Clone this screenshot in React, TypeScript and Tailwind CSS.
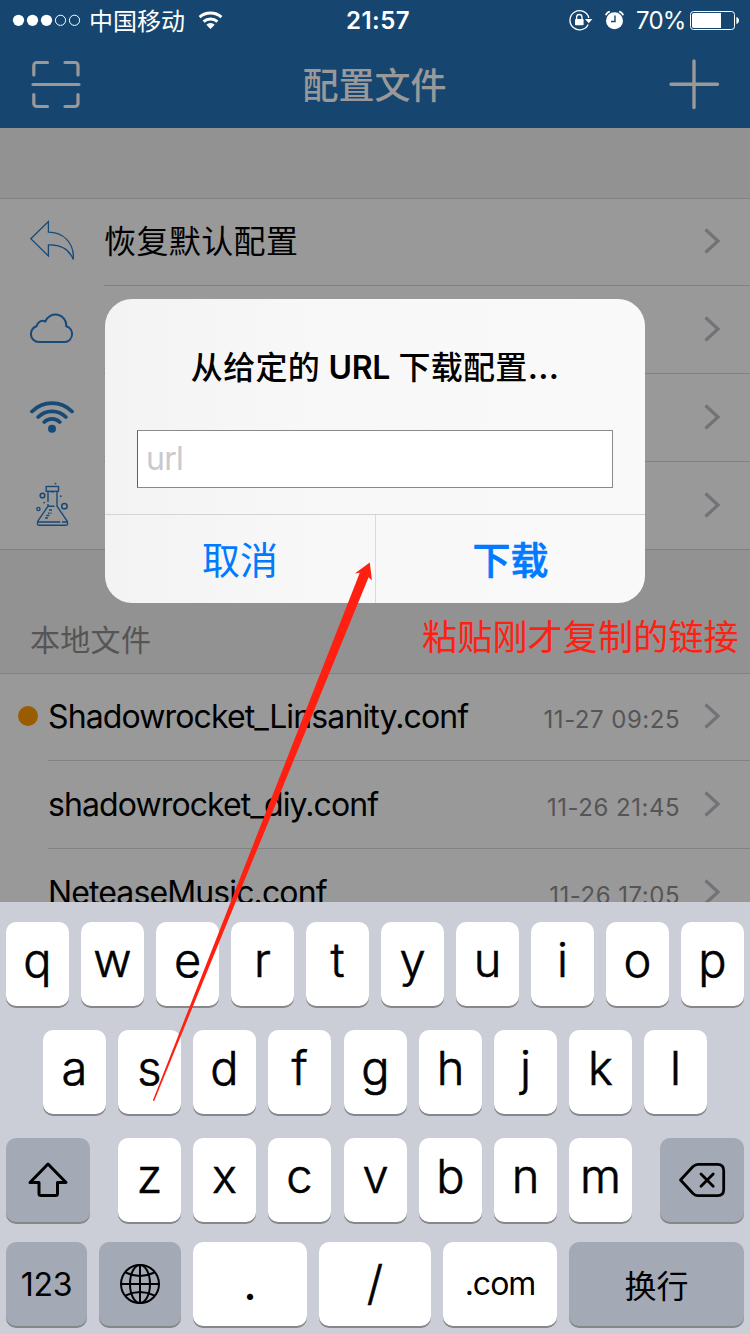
import type { ReactNode } from "react";

const FONT = "font-['Inter','Noto_Sans_CJK_SC',sans-serif]";

function StatusBar() {
  return (
    <div className="flex h-10 items-center text-[24px] leading-none text-white">
      <svg className="ml-3 h-3 w-[70px] shrink-0" viewBox="12 14 70 12">
        <g fill="white">
          <circle cx="18.5" cy="20.3" r="5.6" />
          <circle cx="32.5" cy="20.3" r="5.6" />
          <circle cx="46.5" cy="20.3" r="5.6" />
        </g>
        <g fill="none" stroke="white" strokeWidth="1">
          <circle cx="60.5" cy="20.3" r="5.1" />
          <circle cx="74.5" cy="20.3" r="5.1" />
        </g>
      </svg>
      <span className="ml-[7px] w-[98px] whitespace-nowrap pt-[3px]">中国移动</span>
      <svg className="ml-[10px] h-10 w-7 shrink-0" viewBox="197 0 28 40" fill="none" stroke="white" strokeWidth="3">
        <path d="M199.600 17.200a16.500 16.500 0 0 1 21.800 0" />
        <path d="M203.600 21.600a10.500 10.500 0 0 1 13.800 0" />
        <path d="M210.5 29l-4.2-4.3a6 6 0 0 1 8.4 0z" fill="white" stroke="none" />
      </svg>
      <span className="ml-[121px] w-[67px] whitespace-nowrap pt-0.5 font-semibold tracking-[0.5px]">21:57</span>
      <svg className="ml-auto h-10 w-[60px] shrink-0" viewBox="567 0 60 40">
        <path d="M588.2 24.5A9.6 9.6 0 1 1 588.9 18" fill="none" stroke="white" strokeWidth="1.3" />
        <path d="M585 19h7.4l-3.700 4.200z" fill="white" />
        <rect x="575" y="19" width="8.6" height="6.3" rx="0.8" fill="white" />
        <path d="M576.6 19v-1.800a2.700 2.700 0 0 1 5.400 0V19" fill="none" stroke="white" strokeWidth="1.3" />
        <circle cx="614.5" cy="20.8" r="8.5" fill="white" />
        <path d="M615 15.5v6h-4" fill="none" stroke="#16466f" strokeWidth="1.4" />
        <path d="M605.8 15.3a5.500 5.500 0 0 1 4-3.700M623.200 15.300a5.500 5.500 0 0 0-4-3.700" fill="none" stroke="white" strokeWidth="1.7" />
      </svg>
      <span className="ml-[9px] w-[50px] whitespace-nowrap pt-0.5 tracking-[-0.8px]">70%</span>
      <svg className="ml-1 mr-2.5 h-10 w-[50px] shrink-0" viewBox="690 0 50 40">
        <rect x="690.5" y="11.5" width="44" height="18" rx="3" fill="none" stroke="white" />
        <path d="M693.8 13H721v15h-27.2a1.8 1.8 0 0 1-1.8-1.8V14.8a1.8 1.8 0 0 1 1.8-1.8z" fill="white" />
        <path d="M736.4 17c1.8.6 2.6 2 2.6 3.5s-.8 2.900-2.600 3.500z" fill="white" />
      </svg>
    </div>
  );
}

function NavBar() {
  return (
    <div className="flex h-[88px] items-center justify-between pl-[31px] pr-[30px]">
      <svg className="h-[88px] w-[50px]" viewBox="31 40 50 88" fill="none" stroke="#999" strokeWidth="3.2" strokeLinecap="round" strokeLinejoin="round">
        <path d="M33.8 75V65.500a3 3 0 0 1 3-3H47.500M65 62.500H75a3 3 0 0 1 3 3V75M33.800 94.500V103.500a3 3 0 0 0 3 3H47.500M65 106.500H75a3 3 0 0 0 3-3V94.500M33 84.500H79" />
      </svg>
      <h1 className="pt-[3px] text-[36px] font-medium leading-none text-[#999]">配置文件</h1>
      <svg className="h-[88px] w-[52px]" viewBox="668 40 52 88" fill="none" stroke="#999" strokeWidth="3.4" strokeLinecap="round">
        <path d="M694 61V107.500M671 84.300H717.500" />
      </svg>
    </div>
  );
}

function Chevron() {
  return (
    <svg className="h-7 w-[18px] shrink-0" viewBox="0 0 18 28" fill="none" stroke="#737377" strokeWidth="3.2">
      <path d="M1.500 2.500L14 14L1.500 25.500" />
    </svg>
  );
}

function ReplyIcon() {
  return (
    <svg className="h-[88px] w-11" viewBox="30 198 44 88" fill="none" stroke="#184a78" strokeWidth="1.3">
      <path d="M30.800 238.700L48.400 221.500V232.200C62 232.200 74.500 241.500 73.300 259.500C69 249 60.500 244.500 48.400 245V256Z" />
    </svg>
  );
}

function CloudIcon() {
  return (
    <svg className="h-[88px] w-11" viewBox="30 286 44 88" fill="none" stroke="#184a78" strokeWidth="2" strokeLinejoin="round">
      <path d="M39 342H65.200A8.100 8.100 0 0 0 66.200 326.200A10.800 10.800 0 0 0 45.300 321.600A5.800 5.800 0 0 0 36.800 326A9 9 0 0 0 30.900 334A8 8 0 0 0 39 342Z" />
    </svg>
  );
}

function WifiIcon() {
  return (
    <svg className="h-[88px] w-11" viewBox="30 374 44 88" fill="none" stroke="#184a78" strokeWidth="3.8" strokeLinecap="round">
      <path d="M32 411.500a28 28 0 0 1 40 0M38.200 417a19.500 19.500 0 0 1 27.600 0M44.300 422a11 11 0 0 1 15.400 0" />
      <circle cx="52" cy="428.800" r="4" fill="#184a78" stroke="none" />
    </svg>
  );
}

function FlaskIcon() {
  return (
    <svg className="h-[88px] w-11" viewBox="30 462 44 88" fill="none" stroke="#184a78" strokeWidth="1.400">
      <rect x="46.200" y="486.500" width="12.300" height="4.800" />
      <path d="M48 491.500V502M48 504V506.200L38 520.800M57 491.500V506.200L67 520.800M50.500 491.800H54.500M48 506.200H54.500M38 522H60.300M62 522H67M38 520.800Q36.500 525.300 39 525.300H66Q68.500 525.300 67 520.800M49 510H52M48 513.200H49.500M50.500 513.200H51.500M46.200 515.500H49.500M45 518H48" />
      <circle cx="42.500" cy="495.500" r="2.300" strokeWidth="1.600" />
      <circle cx="64.400" cy="506.200" r="2.700" strokeWidth="1.600" />
      <circle cx="38.400" cy="509" r="1.600" strokeWidth="1.400" />
      <g fill="#184a78" stroke="none">
        <circle cx="55.500" cy="483.600" r="0.900" />
        <circle cx="60.800" cy="496.200" r="0.900" />
        <circle cx="44.200" cy="502.600" r="0.900" />
      </g>
    </svg>
  );
}

function ActionRow({ icon, label, last = false }: { icon: ReactNode; label?: string; last?: boolean }) {
  return (
    <div className="flex h-[88px] pl-[30px]">
      {icon}
      <div className={`ml-[30px] flex flex-1 items-center justify-between border-b pb-px pr-7 ${last ? "border-transparent" : "border-[#828284]"}`}>
        <span className="pt-px text-[32px] leading-none tracking-[0.4px]">{label}</span>
        <Chevron />
      </div>
    </div>
  );
}

function FileRow({ name, date, tracking, active = false }: { name: string; date: string; tracking: string; active?: boolean }) {
  return (
    <div className="flex h-[88px]">
      <div className="flex w-12 shrink-0 items-center pl-[18px]">
        {active && <div className="mb-0.5 size-5 rounded-full bg-[#9a5c00]" />}
      </div>
      <div className="flex flex-1 items-center border-b border-[#828284] pb-px pr-7">
        <span className={`pt-0.5 text-[32px] leading-none ${tracking}`}>{name}</span>
        <span className="ml-auto mr-6 pt-[7px] text-[24px] leading-none tracking-[0.5px] text-[#555557]">{date}</span>
        <Chevron />
      </div>
    </div>
  );
}

function Dialog() {
  return (
    <div className="absolute left-[105px] top-[299px] flex h-[304px] w-[540px] flex-col overflow-hidden rounded-[27px] bg-linear-to-r from-[#f3f3f4] via-[#f8f8f8] via-40% to-[#f9f9f9]">
      <div className="flex h-[215px] flex-col items-center px-8">
        <h2 className="mt-[53px] whitespace-nowrap text-[32px] font-semibold leading-none tracking-[0.3px] text-black">
          <span className="font-medium">从给定的</span> <span className="tracking-[-0.3px]">URL</span> <span className="font-medium">下载配置</span>...
        </h2>
        <input
          className="mt-[46px] h-[58px] w-[476px] border border-[#8a8a8a] border-l-[#606060] bg-white px-2 pb-0.5 text-[32px] leading-none tracking-[-0.7px] outline-none placeholder:text-[#c9c9ce]"
          placeholder="url"
        />
      </div>
      <div className="flex flex-1 border-t border-[#d3d3d9] text-[38px] leading-none text-[#007aff]">
        <button className="w-[271px] border-r border-[#d9d9de] pt-0.5 font-normal">取消</button>
        <button className="flex-1 pt-0.5 font-medium [-webkit-text-stroke:0.6px_#007aff]">下载</button>
      </div>
    </div>
  );
}

function Key({ children, className = "w-[63px]", dark = false }: { children: ReactNode; className?: string; dark?: boolean }) {
  return (
    <button
      className={`flex h-[84px] shrink-0 items-center justify-center rounded-[10px] leading-none text-black shadow-[0_2px_0_#85878b] ${dark ? "bg-[#a3aab6]" : "bg-white"} ${className}`}
    >
      {children}
    </button>
  );
}

function Letter({ char, className = "w-[63px]" }: { char: string; className?: string }) {
  return (
    <Key className={className}>
      <span className="pb-[9px] text-[47px] font-light [-webkit-text-stroke:0.6px_black]">{char}</span>
    </Key>
  );
}

function Keyboard() {
  return (
    <div className="absolute inset-x-0 bottom-0 h-[432px] bg-[#cbced6] pt-5">
      <div className="flex gap-3 pl-1.5">
        {"qwertyuiop".split("").map((c) => <Letter key={c} char={c} />)}
      </div>
      <div className="mt-6 flex gap-3 pl-[43px]">
        {"asdfghjkl".split("").map((c) => <Letter key={c} char={c} className={c === "g" ? "ml-px w-[63px]" : "w-[63px]"} />)}
      </div>
      <div className="mt-6 flex gap-3 pl-1.5">
        <Key dark className="mr-4 w-[84px]">
          <svg className="h-[84px] w-[84px]" viewBox="6 1138 84 84" fill="none" stroke="black" strokeWidth="3" strokeLinejoin="round">
            <path d="M48 1164L66 1182.500H57.500V1193.500a2 2 0 0 1-2 2H41a2 2 0 0 1-2-2V1182.500H30Z" />
          </svg>
        </Key>
        {"zxcvbnm".split("").map((c) => <Letter key={c} char={c} className={c === "v" ? "ml-px w-[63px]" : "w-[63px]"} />)}
        <Key dark className="ml-4 w-[84px]">
          <svg className="h-[84px] w-[84px]" viewBox="660 1138 84 84" fill="none" stroke="black" strokeWidth="2.800" strokeLinecap="round" strokeLinejoin="round">
            <path d="M680.500 1180L693 1166.500Q695.500 1164.300 698 1164.300H717.500Q723.700 1164.300 723.700 1170.500V1189.500Q723.700 1195.700 717.500 1195.700H698Q695.500 1195.700 693 1193.500Z" />
            <path d="M701 1174L713.200 1186.300M713.200 1174L701 1186.300" />
          </svg>
        </Key>
      </div>
      <div className="mt-5 flex gap-3 pl-1.5">
        <Key dark className="w-[81px]"><span className="pt-0.5 text-[32px] tracking-[-0.2px]">123</span></Key>
        <Key dark className="w-[82px]">
          <svg className="h-[84px] w-[82px]" viewBox="99 1242 82 84" fill="none" stroke="black" strokeWidth="2">
            <circle cx="140" cy="1284" r="19" />
            <ellipse cx="140" cy="1284" rx="10" ry="19" />
            <path d="M140 1265V1303M121 1284H159M125.500 1272.500Q140 1279.500 154.500 1272.500M125.500 1295.500Q140 1288.500 154.500 1295.500" />
          </svg>
        </Key>
        <Key className="w-[114px]"><span className="pb-1 text-[47px]">.</span></Key>
        <Key className="w-[112px]"><span className="pb-1 text-[47px] font-light [-webkit-text-stroke:0.6px_black]">/</span></Key>
        <Key className="w-[114px]"><span className="text-[32px] tracking-[-1px]">.com</span></Key>
        <Key dark className="w-[175px]"><span className="pt-[5px] text-[32px]">换行</span></Key>
      </div>
    </div>
  );
}

export default function App() {
  return (
    <div className={`relative h-[1334px] w-[750px] overflow-hidden bg-[#929292] text-black ${FONT}`}>
      <header className="h-32 bg-[#16466f]">
        <StatusBar />
        <NavBar />
      </header>
      <main>
        <section className="mt-[70px] border-y border-[#828284] bg-[#999]">
          <div className="-my-px">
            <ActionRow icon={<ReplyIcon />} label="恢复默认配置" />
            <ActionRow icon={<CloudIcon />} />
            <ActionRow icon={<WifiIcon />} />
            <ActionRow icon={<FlaskIcon />} last />
          </div>
        </section>
        <div className="flex h-[123px] items-end pb-[18px] pl-[30px] text-[30px] leading-none tracking-[0.3px] text-[#555557]">
          本地文件
        </div>
        <section className="border-t border-[#828284] bg-[#999]">
          <div className="-mt-px">
            <FileRow name="Shadowrocket_Linsanity.conf" date="11-27 09:25" tracking="tracking-[-0.87px]" active />
            <FileRow name="shadowrocket_diy.conf" date="11-26 21:45" tracking="tracking-[-0.9px]" />
            <FileRow name="NeteaseMusic.conf" date="11-26 17:05" tracking="tracking-[-0.88px]" />
          </div>
        </section>
      </main>
      <Dialog />
      <Keyboard />
      <p className="absolute left-[422px] top-[620px] whitespace-nowrap text-[35px] leading-none tracking-[0.2px] text-[#ff2012]">粘贴刚才复制的链接</p>
      <svg className="pointer-events-none absolute left-[150px] top-[560px] h-[544px] w-[225px]" viewBox="150 560 225 544">
        <path d="M369.800 562.500L354.800 573.600L359.800 572.800L152.800 1100.500L154.200 1101L368.600 577.300L371.900 580.200Z" fill="#ff2012" />
      </svg>
    </div>
  );
}
